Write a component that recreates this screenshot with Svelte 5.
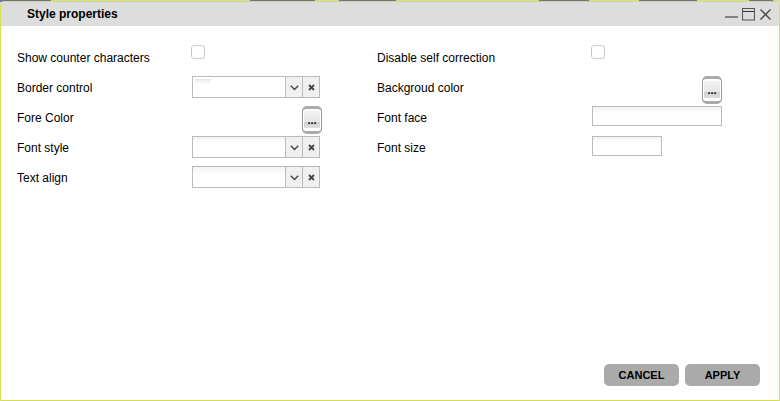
<script>
  let counter = $state(false);
  let correction = $state(false);
  let border = $state('');
  let fontStyle = $state('');
  let align = $state('');
</script>

{#snippet clearIcon()}
  <svg width="7" height="7" viewBox="0 0 7 7" aria-hidden="true">
    <path d="M1 1L6 6M6 1L1 6" stroke="#444" stroke-width="1.8" />
  </svg>
{/snippet}

{#snippet arrow()}
  <span class="arrow" aria-hidden="true">
    <svg width="9" height="6" viewBox="0 0 9 6">
      <path d="M.8 .8L4.5 4.5L8.2 .8" fill="none" stroke="#444" stroke-width="1.4" />
    </svg>
  </span>
{/snippet}

<div class="page">
  <section class="dialog" aria-labelledby="dialog-title">
    <header>
      <h1 id="dialog-title">Style properties</h1>
      <div class="window-tools">
        <button type="button" aria-label="Minimize">
          <svg width="13" height="13" viewBox="0 0 13 13"><path d="M0 9H13" stroke="#666" stroke-width="1.4" /></svg>
        </button>
        <button type="button" aria-label="Maximize">
          <svg width="13" height="13" viewBox="0 0 13 13">
            <path d="M.5 .5H12.5V12H.5Z" fill="none" stroke="#555" stroke-width="1.1" />
            <path d="M1 3.5H12" stroke="#333" />
          </svg>
        </button>
        <button type="button" aria-label="Close">
          <svg width="13" height="13" viewBox="0 0 13 13">
            <path d="M1.5 1.5L11.5 11.5M11.5 1.5L1.5 11.5" stroke="#444" stroke-width="1.3" />
          </svg>
        </button>
      </div>
    </header>

    <form onsubmit={(e) => e.preventDefault()}>
      <div class="columns">
        <div class="column">
          <div class="row">
            <label for="counter">Show counter characters</label>
            <input id="counter" type="checkbox" bind:checked={counter} />
          </div>
          <div class="row">
            <label for="border">Border control</label>
            <div class="combo">
              <div class="pick marked">
                <select id="border" bind:value={border}><option value=""></option></select>
                {@render arrow()}
              </div>
              <button type="button" class="clear" aria-label="Clear" onclick={() => (border = '')}>{@render clearIcon()}</button>
            </div>
          </div>
          <div class="row">
            <label for="fore">Fore Color</label>
            <div class="color"><button id="fore" type="button" class="more">...</button></div>
          </div>
          <div class="row">
            <label for="font-style">Font style</label>
            <div class="combo">
              <div class="pick">
                <select id="font-style" bind:value={fontStyle}><option value=""></option></select>
                {@render arrow()}
              </div>
              <button type="button" class="clear" aria-label="Clear" onclick={() => (fontStyle = '')}>{@render clearIcon()}</button>
            </div>
          </div>
          <div class="row">
            <label for="align">Text align</label>
            <div class="combo">
              <div class="pick">
                <select id="align" bind:value={align}><option value=""></option></select>
                {@render arrow()}
              </div>
              <button type="button" class="clear" aria-label="Clear" onclick={() => (align = '')}>{@render clearIcon()}</button>
            </div>
          </div>
        </div>

        <div class="column second">
          <div class="row">
            <label for="correction">Disable self correction</label>
            <input id="correction" type="checkbox" bind:checked={correction} />
          </div>
          <div class="row">
            <label for="background">Backgroud color</label>
            <div class="color"><button id="background" type="button" class="more">...</button></div>
          </div>
          <div class="row">
            <label for="face">Font face</label>
            <input id="face" type="text" class="wide" />
          </div>
          <div class="row">
            <label for="size">Font size</label>
            <input id="size" type="text" class="narrow" />
          </div>
        </div>
      </div>

      <footer>
        <button type="button" class="action">CANCEL</button>
        <button type="submit" class="action">APPLY</button>
      </footer>
    </form>
  </section>
</div>

<style>
  :global(body) {
    margin: 0;
  }

  .page,
  .page * {
    box-sizing: border-box;
  }

  .page {
    min-height: 100vh;
    padding-top: 1px;
    display: flex;
    color: #000;
    font: 12px/30px "Liberation Sans", Arial, sans-serif;
    background:
      linear-gradient(90deg,
        #66d 51px, #d4d4d4 51px 250px,
        #66d 250px 315px, #d4d4d4 315px 339px,
        #66d 339px 396px, #d4d4d4 396px 539px,
        #66d 539px 589px, #d4d4d4 589px 639px,
        #66d 639px 697px, #d4d4d4 697px 749px,
        #66d 749px 773px, #d4d4d4 773px) 0 0 / 100% 2px no-repeat,
      #ddd;
  }

  button {
    padding: 0;
    font-family: inherit;
    color: inherit;
  }

  svg {
    display: block;
  }

  .dialog {
    flex: 1;
    display: flex;
    flex-direction: column;
    border: 1px solid #d6df4c;
    border-radius: 4px 4px 0 0;
    background: #fff;
    overflow: hidden;
  }

  header {
    height: 24px;
    padding: 0 7px 0 26px;
    display: flex;
    align-items: center;
    justify-content: space-between;
    background: #ddd;
  }

  h1 {
    margin: 0;
    font-size: 12px;
    line-height: 24px;
  }

  .window-tools {
    display: flex;
    gap: 4px;
  }

  .window-tools button {
    border: 0;
    background: none;
  }

  form {
    flex: 1;
    display: flex;
    flex-direction: column;
    justify-content: space-between;
    padding: 17px 19px 14px 16px;
  }

  .columns {
    display: flex;
  }

  .column {
    width: 360px;
  }

  .row {
    height: 30px;
    padding-top: 3px;
    display: flex;
    align-items: flex-start;
  }

  label {
    width: 175px;
    margin-top: -3px;
  }

  .second label {
    width: 215px;
  }

  input[type="checkbox"] {
    appearance: none;
    width: 14px;
    height: 14px;
    margin: -1px;
    border: 1px solid #c8c8c8;
    border-radius: 3px;
    background: #fff;
  }

  input[type="checkbox"]:checked {
    background: #777;
  }

  input[type="text"],
  select {
    margin: 0;
    padding: 0 4px;
    border: 1px solid #bbb;
    border-radius: 0;
    background: linear-gradient(#f1f3f3, #fff 7px);
    font: inherit;
  }

  input[type="text"] {
    height: 20px;
  }

  .wide {
    width: 130px;
  }

  .narrow {
    width: 70px;
  }

  .combo {
    display: flex;
    width: 128px;
    height: 22px;
  }

  .pick {
    position: relative;
    flex: 1;
    display: flex;
  }

  select {
    appearance: none;
    width: 100%;
    border-right: 0;
  }

  .marked select {
    background: linear-gradient(#dde5e8, #f1f3f3 2px, #fff) 2px 2px / 16px 6px no-repeat #fff;
  }

  .arrow {
    position: absolute;
    inset: 1px 0 1px auto;
    width: 17px;
    display: grid;
    place-items: center;
    padding-top: 2px;
    border-left: 1px solid #bbb;
    background: #f0f0f0;
    pointer-events: none;
  }

  .clear {
    width: 18px;
    display: grid;
    place-items: center;
    padding-top: 1px;
    border: 1px solid #bbb;
    background: #f0f0f0;
  }

  .color {
    width: 130px;
    display: flex;
    justify-content: flex-end;
  }

  .more {
    width: 20px;
    height: 28px;
    border: 1px solid;
    border-width: 3px 1px;
    border-color: #aaa #999;
    border-radius: 5px;
    background: linear-gradient(#f2f2f2, #e6e6e6 11px, #cfcfcf 11px, #dedede) content-box #fff;
    padding: 2px 1px 3px;
    font-size: 11px;
    font-weight: bold;
    line-height: 19px;
  }

  footer {
    display: flex;
    justify-content: flex-end;
    gap: 6px;
  }

  .action {
    width: 75px;
    height: 22px;
    border: 0;
    border-radius: 5px;
    background: #aaa;
    font-size: 11px;
    font-weight: bold;
  }
</style>
